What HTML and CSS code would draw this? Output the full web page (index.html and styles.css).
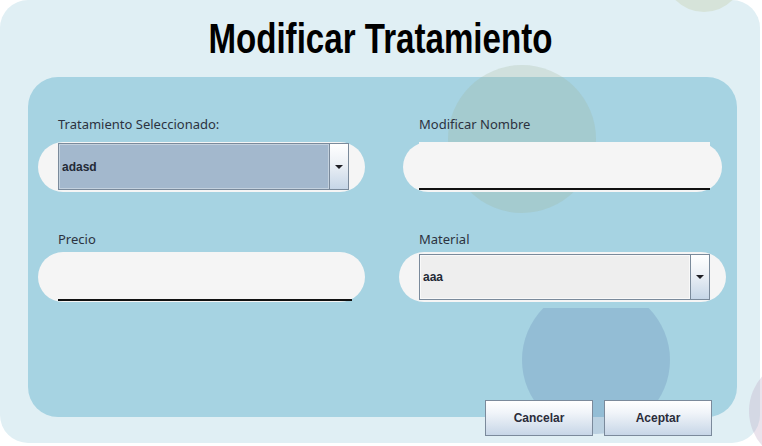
FILE: index.html
```html
<!DOCTYPE html>
<html lang="es">
<head>
<meta charset="utf-8">
<title>Modificar Tratamiento</title>
<link rel="stylesheet" href="styles.css">
</head>
<body>
<div class="page">
  <div class="card">
    <span class="circle c1"></span>
    <span class="circle c4"></span>
    <span class="circle c3"></span>
    <span class="clip c2wrap"><span class="circle c2"></span></span>

    <h1 class="title"><span class="title-text">Modificar Tratamiento</span></h1>

    <div class="panel">
      <div class="field">
        <label class="label">Tratamiento Seleccionado:</label>
        <div class="pill">
          <div class="combo combo-sel">
            <span class="combo-value">adasd</span>
            <span class="combo-btn"><svg width="8" height="4" viewBox="0 0 8 4"><path d="M0 0H8L4 4Z" fill="#1e1e24"/></svg></span>
          </div>
        </div>
      </div>

      <div class="field">
        <label class="label">Modificar Nombre</label>
        <div class="pill pill-narrow">
          <div class="input input-nombre"></div>
        </div>
      </div>

      <div class="field">
        <label class="label label-tight">Precio</label>
        <div class="pill">
          <div class="input input-precio"></div>
        </div>
      </div>

      <div class="field">
        <label class="label label-tight">Material</label>
        <div class="pill">
          <div class="combo combo-mat">
            <span class="combo-value">aaa</span>
            <span class="combo-btn"><svg width="8" height="4" viewBox="0 0 8 4"><path d="M0 0H8L4 4Z" fill="#1e1e24"/></svg></span>
          </div>
        </div>
      </div>
    </div>

    <div class="actions">
      <button class="btn">Cancelar</button>
      <button class="btn">Aceptar</button>
    </div>
  </div>
</div>
</body>
</html>
```
FILE: styles.css
```css
html, body {
  margin: 0;
  padding: 0;
  background: #ffffff;
}

.page {
  width: 762px;
  height: 446px;
  overflow: hidden;
  position: relative;
}

.card {
  position: relative;
  width: 760px;
  height: 443px;
  background: #e0eff4;
  border-radius: 28px;
}

.circle {
  position: absolute;
  border-radius: 50%;
  display: block;
}

.c1 {
  left: 448px;
  top: 65px;
  width: 148px;
  height: 148px;
  background: rgba(160, 180, 150, 0.25);
}

.c4 {
  left: 664px;
  top: -68px;
  width: 80px;
  height: 80px;
  background: #d6e3d9;
}

.c3 {
  left: 749px;
  top: 359px;
  width: 104px;
  height: 104px;
  background: rgba(184, 162, 191, 0.3);
}

.clip {
  position: absolute;
  display: block;
  overflow: hidden;
}

.c2wrap {
  left: 522px;
  top: 308px;
  width: 148px;
  height: 130px;
}

.c2 {
  left: 0;
  top: -22px;
  width: 148px;
  height: 148px;
  background: rgba(103, 138, 183, 0.3);
}

.title {
  margin: 0;
  height: 77px;
  box-sizing: border-box;
  padding-top: 17px;
  text-align: center;
  font-family: "Liberation Sans", Arial, sans-serif;
  font-weight: bold;
  font-size: 43px;
  line-height: 43px;
  color: #000;
}

.title-text {
  display: inline-block;
  transform: scaleX(0.77);
}

.panel {
  margin-left: 28px;
  width: 709px;
  height: 340px;
  box-sizing: border-box;
  padding: 39px 0 0 10px;
  background: #a6d3e2;
  border-radius: 30px;
  display: grid;
  grid-template-columns: 327px 327px;
  column-gap: 34px;
  row-gap: 39px;
  align-content: start;
}

.label {
  position: relative;
  z-index: 1;
  display: block;
  padding-left: 20px;
  margin-bottom: 10px;
  font-family: "Noto Sans", "DejaVu Sans", sans-serif;
  font-size: 13px;
  line-height: 16px;
  color: #2c3240;
}

.label-tight {
  margin-bottom: 5px;
}

.pill {
  position: relative;
  z-index: 1;
  height: 50px;
  box-sizing: border-box;
  padding-left: 20px;
  background: #f5f5f5;
  border-radius: 25px;
  display: flex;
  align-items: flex-start;
}

.pill-narrow {
  width: 319px;
  margin-left: 4px;
  padding-left: 16px;
}

.input {
  box-sizing: border-box;
  border-bottom: 2px solid #111;
}

.input-nombre {
  width: 291px;
  height: 48px;
  background: #f5f5f5;
}

.input-precio {
  width: 294px;
  height: 49px;
  background: transparent;
}

.combo {
  box-sizing: border-box;
  width: 291px;
  border: 1px solid #7a8a9b;
  display: flex;
}

.combo-sel {
  margin-top: 1px;
  height: 47px;
}

.combo-mat {
  margin-top: 2px;
  height: 46px;
}

.combo-value {
  flex: 1;
  display: flex;
  align-items: center;
  padding-left: 2px;
  font-family: "Liberation Sans", Arial, sans-serif;
  font-weight: bold;
  font-size: 12px;
  color: #232a36;
}

.combo-sel .combo-value {
  background: #a3b8cd;
  border: 1px solid #c3d1de;
}

.combo-mat .combo-value {
  background: #eeeeee;
  border: 1px solid #f9f9f9;
}

.combo-btn {
  width: 18px;
  border-left: 1px solid #7a8a9b;
  background: linear-gradient(to bottom, #ffffff 0%, #eef2f7 40%, #c6d6e7 100%);
  display: flex;
  align-items: center;
  justify-content: center;
}

.combo-btn svg {
  display: block;
}

.actions {
  margin-top: -17px;
  padding-right: 48px;
  display: flex;
  justify-content: flex-end;
  gap: 11px;
}

.btn {
  position: relative;
  z-index: 1;
  width: 108px;
  height: 36px;
  margin: 0;
  padding: 0;
  border: 1px solid #7b8a9b;
  border-radius: 0;
  background: linear-gradient(to bottom, #ffffff 0%, #f0f4f9 35%, #c7d6e7 100%);
  font-family: "Liberation Sans", Arial, sans-serif;
  font-weight: bold;
  font-size: 12px;
  color: #2a2c3a;
  cursor: pointer;
}
```
